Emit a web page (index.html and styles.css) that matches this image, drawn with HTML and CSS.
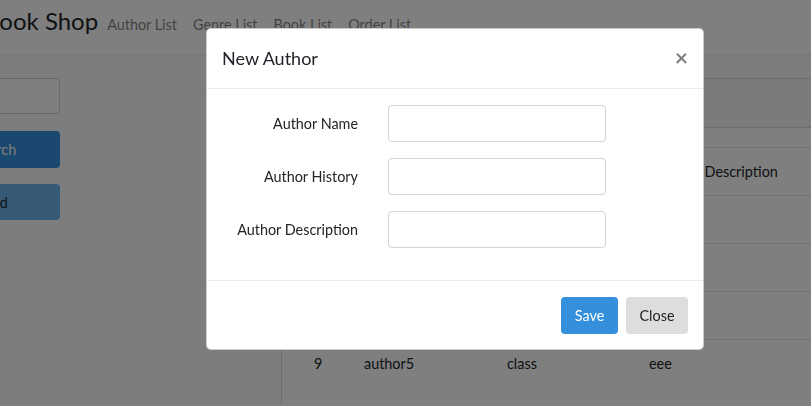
FILE: index.html
```html
<!DOCTYPE html>
<html lang="en">
<head>
<meta charset="utf-8">
<title>Book Shop</title>
<link rel="stylesheet" href="styles.css">
</head>
<body>
<div class="page">
  <nav class="navbar">
    <span class="brand">Book Shop</span>
    <a class="nav-link">Author List</a>
    <a class="nav-link">Genre List</a>
    <a class="nav-link">Book List</a>
    <a class="nav-link">Order List</a>
  </nav>
  <main class="content">
    <aside class="side">
      <input class="form-control" type="text">
      <button class="btn btn-primary">Search</button>
      <button class="btn btn-info">Add</button>
    </aside>
    <section class="card">
      <div class="card-header"></div>
      <div class="card-body">
        <table class="table">
          <thead>
            <tr><th class="c1">#</th><th class="c2">Author Name</th><th class="c3">Author History</th><th class="c4">Author Description</th><th></th></tr>
          </thead>
          <tbody>
            <tr><td>6</td><td>author2</td><td>class</td><td>bbb</td><td></td></tr>
            <tr><td>7</td><td>author3</td><td>class</td><td>ccc</td><td></td></tr>
            <tr><td>8</td><td>author4</td><td>class</td><td>ddd</td><td></td></tr>
            <tr><td>9</td><td>author5</td><td>class</td><td>eee</td><td></td></tr>
          </tbody>
        </table>
      </div>
    </section>
  </main>
</div>

<div class="backdrop"></div>
<div class="modal-wrap">
  <div class="modal">
    <div class="modal-header">
      <h5 class="modal-title">New Author</h5>
      <button class="close" type="button">&times;</button>
    </div>
    <div class="modal-body">
      <div class="form-row">
        <label class="col-label">Author Name</label>
        <div class="col-input"><input class="form-control" type="text"></div>
      </div>
      <div class="form-row">
        <label class="col-label">Author History</label>
        <div class="col-input"><input class="form-control" type="text"></div>
      </div>
      <div class="form-row">
        <label class="col-label">Author Description</label>
        <div class="col-input"><input class="form-control" type="text"></div>
      </div>
    </div>
    <div class="modal-footer">
      <button class="btn btn-save">Save</button>
      <button class="btn btn-close">Close</button>
    </div>
  </div>
</div>
</body>
</html>
```

FILE: styles.css
```css
* { box-sizing: border-box; }
html, body {
  margin: 0;
  padding: 0;
  overflow: hidden;
  height: 100%;
}
body {
  font-family: Lato, "Liberation Sans", sans-serif;
  font-size: 14.4px;
  line-height: 1.6;
  color: #212529;
  background: #f8fafc;
}
.page {
  width: 1200px;
  margin-left: -160px;
}
.navbar {
  height: 54px;
  background: #fff;
  display: flex;
  align-items: flex-start;
  padding-left: 144px;
  box-shadow: 0 1px 2px rgba(0,0,0,0.075);
}
.brand {
  font-size: 24px;
  line-height: 1;
  margin-top: 9px;
  margin-right: 1px;
  color: #212529;
}
.nav-link {
  color: rgba(0,0,0,0.5);
  margin-top: 13px;
  padding: 0 8px;
}
.content {
  display: flex;
  padding-top: 24px;
  padding-left: 90px;
}
.side {
  width: 130px;
  display: flex;
  flex-direction: column;
  gap: 16px;
  margin-right: 221px;
}
.form-control {
  display: block;
  width: 100%;
  height: 37px;
  padding: 6px 12px;
  font: inherit;
  border: 1px solid #ced4da;
  border-radius: 4px;
  background: #fff;
}
.side .form-control { height: 36px; margin-bottom: 1px; }
.btn {
  display: inline-block;
  font: inherit;
  padding: 6px 12px;
  height: 37px;
  border: 1px solid transparent;
  border-radius: 4px;
  text-align: center;
}
.side .btn { width: 100%; }
.btn-primary { background: #3490dc; color: #fff; height: 37px; }
.btn-info { background: #6cb2eb; color: #212529; height: 36px; }
.card {
  flex: 1;
  background: #fff;
  border: 1px solid rgba(0,0,0,0.125);
  border-radius: 4px;
  min-height: 400px;
}
.card-header {
  height: 49px;
  background: rgba(0,0,0,0.03);
  border-bottom: 1px solid rgba(0,0,0,0.125);
}
.card-body { padding: 19px 20px; }
.table {
  border-collapse: collapse;
  width: 100%;
}
.table th, .table td {
  text-align: left;
  padding: 12px;
  height: 48px;
  border-top: 1px solid #dee2e6;
  font-weight: 400;
}
.table .c1 { width: 50px; }
.table .c2 { width: 143px; }
.table .c3 { width: 142px; }
.table .c4 { width: 200px; word-spacing: 8px; }

.backdrop {
  position: fixed;
  inset: 0;
  background: rgba(0,0,0,0.5);
}
.modal-wrap {
  position: fixed;
  inset: 0;
  padding: 28px 0 0 206px;
}
.modal {
  width: 498px;
  background: #fff;
  border: 1px solid rgba(0,0,0,0.2);
  border-radius: 5px;
  display: flex;
  flex-direction: column;
}
.modal-header {
  display: flex;
  align-items: flex-start;
  padding: 16px 15px 16px 15px;
  border-bottom: 1px solid #e9ecef;
}
.modal-title {
  margin: 0;
  font-size: 18px;
  font-weight: 400;
  line-height: 27px;
}
.close {
  margin-left: auto;
  padding: 0;
  background: none;
  border: 0;
  font-family: Lato, "Liberation Sans", sans-serif;
  font-size: 23px;
  font-weight: 700;
  line-height: 24px;
  color: #000;
  opacity: 0.5;
}
.modal-body {
  padding: 16px 1px 32px;
}
.form-row {
  display: flex;
  margin-bottom: 16px;
}
.form-row:last-child { margin-bottom: 0; }
.col-label {
  width: 165px;
  padding: 7px 15px 7px 15px;
  text-align: right;
  line-height: 23px;
}
.col-input {
  width: 248px;
  padding: 0 15px;
}
.modal-footer {
  display: flex;
  justify-content: flex-end;
  gap: 8px;
  padding: 16px 15px 15px;
  border-top: 1px solid #e9ecef;
}
.btn-save { background: #3490dc; color: #fff; width: 57px; }
.btn-close { background: #dddddd; color: #212529; width: 62px; }
```
